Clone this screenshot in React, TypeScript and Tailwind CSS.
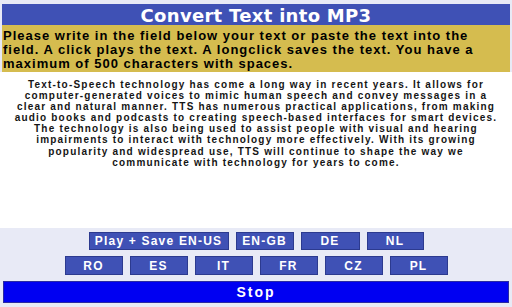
export default function App() {
    const row1 = [
        {label: "Play + Save EN-US", w: "w-[140px]"},
        {label: "EN-GB", w: "w-[58px]"},
        {label: "DE", w: "w-[59px]"},
        {label: "NL", w: "w-[57px]"},
    ];
    const row2 = ["RO", "ES", "IT", "FR", "CZ", "PL"];

    const intro = [
        "Please write in the field below your text or paste the text into the",
        "field. A click plays the text. A longclick saves the text. You have a",
        "maximum of 500 characters with spaces.",
    ];

    const sample = [
        "Text-to-Speech technology has come a long way in recent years. It allows for",
        "computer-generated voices to mimic human speech and convey messages in a",
        "clear and natural manner. TTS has numerous practical applications, from making",
        "audio books and podcasts to creating speech-based interfaces for smart devices.",
        "The technology is also being used to assist people with visual and hearing",
        "impairments to interact with technology more effectively. With its growing",
        "popularity and widespread use, TTS will continue to shape the way we",
        "communicate with technology for years to come.",
    ];

    return (
        <div
            className="w-[512px] h-[307px] bg-[#e8eaf6] flex flex-col overflow-hidden"
            style={{fontFamily: '"Liberation Sans", Arial, sans-serif'}}
        >
            <div className="pt-[4px] px-[2px]">
                <div
                    className="h-[21px] flex items-end justify-center bg-[#3f51b5] text-white font-bold text-[18px] leading-[19px] tracking-[0.3px]"
                    style={{fontFamily: '"DejaVu Sans", Verdana, sans-serif'}}
                >
                    Convert Text into MP3
                </div>
                <div className="h-[47px] bg-[#d5bc4f] text-black font-bold text-[13px] leading-[14px] px-[1px] pt-[4px] tracking-[1px]">
                    {intro.map((l) => (
                        <div key={l} className="whitespace-nowrap">{l}</div>
                    ))}
                </div>
            </div>
            <div className="h-[156px] bg-white pt-[7px]">
                {sample.map((l) => (
                    <div key={l} className="text-center whitespace-nowrap text-[10px] leading-[11.1px] font-bold text-[#151515] tracking-[1.2px]">
                        {l}
                    </div>
                ))}
            </div>
            <div className="flex-1 flex flex-col items-center pt-[4px] px-[3px]">
                <div className="flex gap-[7px] h-[18px]">
                    {row1.map((b) => (
                        <button
                            key={b.label}
                            className={`${b.w} h-full bg-[#3f51b5] border border-[#2c3a8f] text-white font-bold text-[12px] leading-none tracking-[1.2px]`}
                        >
                            {b.label}
                        </button>
                    ))}
                </div>
                <div className="flex gap-[7px] h-[19px] mt-[6px]">
                    {row2.map((l) => (
                        <button
                            key={l}
                            className="w-[58px] h-full bg-[#3f51b5] border border-[#2c3a8f] text-white font-bold text-[12px] leading-none tracking-[1.2px]"
                        >
                            {l}
                        </button>
                    ))}
                </div>
                <button className="mt-[6px] w-full h-[22px] bg-[#0000f2] border border-[#2a2aa0] text-white font-bold text-[14px] leading-none tracking-[2px]">
                    Stop
                </button>
            </div>
        </div>
    );
}
